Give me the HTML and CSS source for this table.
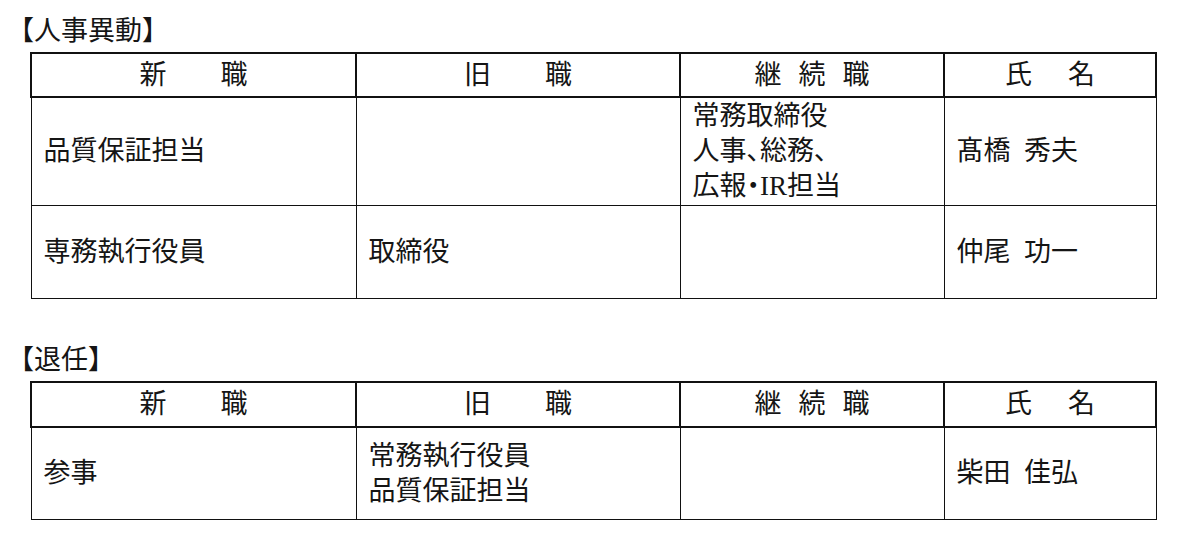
FILE: index.html
```html
<!DOCTYPE html>
<html lang="ja">
<head>
<meta charset="utf-8">
<link rel="stylesheet" href="styles.css">
</head>
<body>
<section class="block">
  <h2 class="title">【人事異動】</h2>
  <table class="grid">
    <colgroup><col class="c1"><col class="c2"><col class="c3"><col class="c4"></colgroup>
    <thead>
      <tr>
        <th><span class="hd hd-wide"><span>新</span><span>職</span></span></th>
        <th><span class="hd hd-wide"><span>旧</span><span>職</span></span></th>
        <th><span class="hd hd-narrow"><span>継</span><span>続</span><span>職</span></span></th>
        <th><span class="hd hd-mid"><span>氏</span><span>名</span></span></th>
      </tr>
    </thead>
    <tbody>
      <tr class="r1">
        <td>品質保証担当</td>
        <td></td>
        <td>常務取締役<br>人事<span class="p">、</span>総務<span class="p">、</span><br>広報<span class="p">・</span>IR担当</td>
        <td>髙橋&ensp;秀夫</td>
      </tr>
      <tr class="r2">
        <td>専務執行役員</td>
        <td>取締役</td>
        <td></td>
        <td>仲尾&ensp;功一</td>
      </tr>
    </tbody>
  </table>
</section>
<section class="block block2">
  <h2 class="title">【退任】</h2>
  <table class="grid grid2">
    <colgroup><col class="c1"><col class="c2"><col class="c3"><col class="c4"></colgroup>
    <thead>
      <tr>
        <th><span class="hd hd-wide"><span>新</span><span>職</span></span></th>
        <th><span class="hd hd-wide"><span>旧</span><span>職</span></span></th>
        <th><span class="hd hd-narrow"><span>継</span><span>続</span><span>職</span></span></th>
        <th><span class="hd hd-mid"><span>氏</span><span>名</span></span></th>
      </tr>
    </thead>
    <tbody>
      <tr class="r2">
        <td>参事</td>
        <td>常務執行役員<br>品質保証担当</td>
        <td></td>
        <td>柴田&ensp;佳弘</td>
      </tr>
    </tbody>
  </table>
</section>
</body>
</html>
```
FILE: styles.css
```css
html, body {
  margin: 0;
  padding: 0;
  background: #ffffff;
}
body {
  font-family: "Liberation Serif", "Noto Sans CJK JP", sans-serif;
  font-size: 27px;
  color: #151515;
  padding: 7px 0 0 30px;
}
.block2 {
  margin-top: 37px;
}
.title {
  margin: 0 0 0 -23px;
  font-size: 27px;
  font-weight: normal;
  line-height: 49px;
  height: 45px;
}
.grid {
  border-collapse: collapse;
  table-layout: fixed;
  width: 1125px;
}
.c1 { width: 325px; }
.c2 { width: 324px; }
.c3 { width: 264px; }
.c4 { width: 212px; }
.grid th {
  border: 2px solid #111;
  height: 42px;
  padding: 0;
  font-weight: normal;
  text-align: center;
  vertical-align: middle;
  line-height: 35px;
}
.grid2 th {
  height: 43px;
}
.grid td {
  border: 1px solid #111;
  padding: 0 10px 0 12px;
  vertical-align: middle;
  line-height: 35px;
  text-align: left;
  white-space: nowrap;
}
.r1 td { height: 107px; }
.r2 td { height: 92px; }
.grid2 .r2 td { height: 91px; }
.hd {
  display: inline-flex;
  justify-content: center;
}
.hd-wide { gap: 54px; }
.hd-narrow { gap: 17px; }
.hd-mid { gap: 36px; }
.p {
  font-feature-settings: "palt";
}
```
